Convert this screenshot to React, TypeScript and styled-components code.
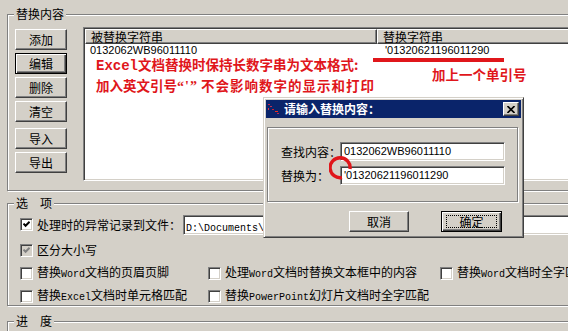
import React from 'react';
import styled, { createGlobalStyle, css } from 'styled-components';

const FACE = '#d4d0c8';
const SHADOW = '#808080';
const DARK = '#404040';
const LIGHT = '#ffffff';
const RED = '#e0161b';
const NAVY = '#0a246a';
const UI_FONT = '"Noto Sans CJK SC", "Liberation Sans", sans-serif';
const DATA_FONT = '"Liberation Sans", "Noto Sans CJK SC", sans-serif';

const GlobalStyle = createGlobalStyle`
  html, body { margin: 0; padding: 0; background: ${FACE}; }
  body {
    font-family: ${UI_FONT};
    font-size: 12px;
    color: #000;
    text-autospace: no-autospace;
    text-spacing-trim: space-all;
  }
  * { box-sizing: border-box; }
`;

const raised = css`
  border: 1px solid;
  border-color: ${LIGHT} ${DARK} ${DARK} ${LIGHT};
  box-shadow: inset -1px -1px ${SHADOW};
  background: ${FACE};
`;

const sunken = css`
  border: 1px solid;
  border-color: ${SHADOW} ${LIGHT} ${LIGHT} ${SHADOW};
  box-shadow: inset 1px 1px ${DARK}, inset -1px -1px ${FACE};
`;

const Screen = styled.div`
  position: relative;
  width: 568px;
  height: 331px;
  overflow: hidden;
  padding: 6px 0 0 7px;
  display: flex;
  flex-direction: column;
  align-items: flex-start;
`;

/* etched group box */
const Group = styled.fieldset<{ $gap?: number; $height?: number }>`
  flex: none;
  width: 600px;
  height: ${({ $height }) => ($height ? `${$height}px` : 'auto')};
  margin: ${({ $gap }) => $gap ?? 0}px 0 0;
  padding: 0;
  border: 1px solid ${SHADOW};
  box-shadow: inset 1px 1px ${LIGHT}, 1px 1px ${LIGHT};
`;

const Legend = styled.legend`
  margin-left: 6px;
  padding: 0 2px;
  line-height: 16px;
  background: ${FACE};
`;

const Latin = styled.span<{ $size?: number }>`
  font-family: 'Liberation Mono', monospace;
  font-size: ${({ $size }) => $size ?? 10}px;
`;

/* ---------- replace list ---------- */
const ReplaceBody = styled.div`
  display: flex;
  align-items: flex-start;
  padding: 5px 0 9px 7px;
`;

const ButtonColumn = styled.div`
  display: flex;
  flex-direction: column;
  gap: 3px;
  margin-top: 2px;
  width: 52px;
`;

const PushButton = styled.button<{ $default?: boolean; $gap?: number; $width?: number }>`
  ${raised};
  width: ${({ $width }) => $width ?? 52}px;
  height: 21px;
  margin-top: ${({ $gap }) => $gap ?? 0}px;
  padding: 0;
  display: flex;
  align-items: center;
  justify-content: center;
  font-family: ${UI_FONT};
  font-size: 12px;
  line-height: 14px;
  color: #000;
  ${({ $default }) =>
    $default &&
    css`
      border: 1px solid #000;
      box-shadow: inset 1px 1px ${LIGHT}, inset -1px -1px ${DARK}, inset -2px -2px ${SHADOW};
    `}
`;

const FocusRing = styled.span`
  flex: 1;
  align-self: stretch;
  margin: 3px 4px;
  border: 1px dotted #000;
  display: flex;
  align-items: center;
  justify-content: center;
`;

const ListView = styled.div`
  ${sunken};
  position: relative;
  flex: 1;
  height: 154px;
  margin-left: 16px;
  padding: 1px;
  background: #fff;
`;

const HeaderRow = styled.div`
  display: flex;
  height: 15px;
`;

const HeaderCell = styled.div<{ $width?: number }>`
  ${raised};
  flex: ${({ $width }) => ($width ? 'none' : 1)};
  width: ${({ $width }) => ($width ? `${$width}px` : 'auto')};
  padding-left: 5px;
  line-height: 13px;
  white-space: nowrap;
`;

const DataRow = styled.div`
  display: flex;
  height: 13px;
  align-items: center;
  font-family: ${DATA_FONT};
  font-size: 11px;
  line-height: 13px;
`;

const DataCell = styled.div<{ $width?: number; $indent: number }>`
  flex: ${({ $width }) => ($width ? 'none' : 1)};
  width: ${({ $width }) => ($width ? `${$width}px` : 'auto')};
  padding-left: ${({ $indent }) => $indent}px;
  white-space: nowrap;
`;

/* red notes drawn over the list */
const Note = styled.div<{ $left: number; $top: number }>`
  position: absolute;
  left: ${({ $left }) => $left}px;
  top: ${({ $top }) => $top}px;
  display: flex;
  flex-direction: column;
  gap: 5px;
  color: ${RED};
  font-size: 13.5px;
  font-weight: 700;
  line-height: 14px;
  white-space: nowrap;
`;

const Quote = styled.span`
  font-family: 'Liberation Serif', serif;
  font-size: 14px;
  letter-spacing: 1px;
`;

const Spread = styled.span`
  letter-spacing: 1px;
`;

const RedBar = styled.div`
  position: absolute;
  left: 289px;
  top: 30px;
  width: 131px;
  height: 4px;
  background: ${RED};
`;

/* ---------- options ---------- */
const OptionsBody = styled.div`
  display: flex;
  flex-direction: column;
  gap: 7px;
  padding: 3px 0 1px 12px;
`;

const OptionLine = styled.div<{ $height?: number }>`
  display: flex;
  align-items: center;
  height: ${({ $height }) => $height ?? 16}px;
`;

const OptionGrid = styled.div`
  display: grid;
  grid-template-columns: 188px 232px 1fr;
  row-gap: 7px;
`;

const Check = styled.label`
  display: flex;
  align-items: center;
  gap: 4px;
  height: 16px;
  line-height: 16px;
  white-space: nowrap;
`;

const CheckText = styled.span<{ $width?: number }>`
  width: ${({ $width }) => ($width ? `${$width}px` : 'auto')};
  flex: none;
`;

const Box = styled.span<{ $disabled?: boolean }>`
  ${sunken};
  flex: none;
  width: 13px;
  height: 13px;
  display: flex;
  align-items: center;
  justify-content: center;
  background: ${({ $disabled }) => ($disabled ? FACE : '#fff')};
`;

const FileField = styled.div`
  ${sunken};
  width: 420px;
  height: 20px;
  background: #fff;
  padding: 3px 0 0 2px;
  line-height: 14px;
  white-space: nowrap;
`;

/* ---------- dialog ---------- */
const Dialog = styled.div`
  position: absolute;
  left: 263px;
  top: 97px;
  width: 261px;
  height: 141px;
  display: flex;
  flex-direction: column;
  padding: 2px;
  background: ${FACE};
  border: 1px solid;
  border-color: ${FACE} ${DARK} ${DARK} ${FACE};
  box-shadow: inset 1px 1px ${LIGHT}, inset -1px -1px ${SHADOW};
`;

const TitleBar = styled.div`
  display: flex;
  align-items: center;
  gap: 3px;
  height: 18px;
  padding: 0 2px 0 1px;
  background: ${NAVY};
  color: #fff;
  font-weight: 700;
  line-height: 16px;
`;

const CloseButton = styled.div`
  ${raised};
  margin-left: auto;
  width: 16px;
  height: 14px;
  display: flex;
  align-items: center;
  justify-content: center;
`;

const Panel = styled.div`
  margin: 9px 3px 0 1px;
  height: 75px;
  padding: 14px 0 0 13px;
  display: flex;
  flex-direction: column;
  gap: 5px;
  border: 1px solid ${SHADOW};
  box-shadow: inset 1px 1px ${LIGHT}, 1px 1px ${LIGHT};
`;

const FieldRow = styled.div`
  display: flex;
  align-items: center;
  height: 19px;
`;

const FieldLabel = styled.span`
  width: 59px;
  white-space: nowrap;
`;

const TextField = styled.div`
  ${sunken};
  width: 165px;
  height: 19px;
  padding: 0 0 0 3px;
  background: #fff;
  font-family: ${DATA_FONT};
  font-size: 11px;
  line-height: 17px;
`;

const DialogButtons = styled.div`
  display: flex;
  gap: 32px;
  margin-top: 9px;
  padding-left: 83px;
`;

const Ring = styled.svg`
  position: absolute;
  left: 329px;
  top: 154px;
`;

function CheckMark({ gray }: { gray?: boolean }) {
  return (
    <svg width="7" height="7" viewBox="0 0 7 7">
      <path d="M0.5 2.6 L2.6 4.8 L6.6 0.8" fill="none" stroke={gray ? SHADOW : '#000'} strokeWidth="2" />
    </svg>
  );
}

function CheckOption({
  checked,
  disabled,
  width,
  children,
}: {
  checked?: boolean;
  disabled?: boolean;
  width?: number;
  children: React.ReactNode;
}) {
  return (
    <Check>
      <Box $disabled={disabled}>{checked && <CheckMark gray={disabled} />}</Box>
      <CheckText $width={width}>{children}</CheckText>
    </Check>
  );
}

function AppIcon() {
  return (
    <svg width="14" height="12" viewBox="0 0 14 12">
      <rect x="1" y="1" width="2" height="1" fill="#d02040" />
      <rect x="3" y="3" width="2" height="1" fill="#c03050" />
      <rect x="1" y="5" width="1" height="2" fill="#e03040" />
      <rect x="5" y="6" width="2" height="1" fill="#d02030" />
      <rect x="8" y="8" width="3" height="1" fill="#f03020" />
      <rect x="10" y="10" width="2" height="1" fill="#c02050" />
    </svg>
  );
}

function CloseGlyph() {
  return (
    <svg width="8" height="7" viewBox="0 0 8 7">
      <path d="M0.5 0 L7.5 7 M7.5 0 L0.5 7" stroke="#000" strokeWidth="1.6" />
    </svg>
  );
}

export default function App() {
  return (
    <>
      <GlobalStyle />
      <Screen>
        <Group>
          <Legend>替换内容</Legend>
          <ReplaceBody>
            <ButtonColumn>
              <PushButton>添加</PushButton>
              <PushButton $default>编辑</PushButton>
              <PushButton>删除</PushButton>
              <PushButton>清空</PushButton>
              <PushButton $gap={3}>导入</PushButton>
              <PushButton>导出</PushButton>
            </ButtonColumn>
            <ListView>
              <HeaderRow>
                <HeaderCell $width={292}>被替换字符串</HeaderCell>
                <HeaderCell>替换字符串</HeaderCell>
              </HeaderRow>
              <DataRow>
                <DataCell $width={292} $indent={5}>0132062WB96011110</DataCell>
                <DataCell $indent={8}>'01320621196011290</DataCell>
              </DataRow>
              <RedBar />
              <Note $left={12} $top={29}>
                <div>
                  <Latin $size={14}>Excel</Latin>文档替换时保持长数字串为文本格式:
                </div>
                <div>
                  加入英文引号<Quote>“'”</Quote> <Spread>不会影响数字的显示和打印</Spread>
                </div>
              </Note>
              <Note $left={348} $top={39}>加上一个单引号</Note>
            </ListView>
          </ReplaceBody>
        </Group>

        <Group $gap={4}>
          <Legend>选　项</Legend>
          <OptionsBody>
            <OptionLine $height={21}>
              <CheckOption checked width={146}>
                处理时的异常记录到文件：
              </CheckOption>
              <FileField>
                <Latin>D:\Documents\替换内容</Latin>
              </FileField>
            </OptionLine>
            <OptionLine>
              <CheckOption checked disabled>区分大小写</CheckOption>
            </OptionLine>
            <OptionGrid>
              <CheckOption>
                替换<Latin>Word</Latin>文档的页眉页脚
              </CheckOption>
              <CheckOption>
                处理<Latin>Word</Latin>文档时替换文本框中的内容
              </CheckOption>
              <CheckOption>
                替换<Latin>Word</Latin>文档时全字匹配
              </CheckOption>
              <CheckOption>
                替换<Latin>Excel</Latin>文档时单元格匹配
              </CheckOption>
              <CheckOption>
                替换<Latin>PowerPoint</Latin>幻灯片文档时全字匹配
              </CheckOption>
            </OptionGrid>
          </OptionsBody>
        </Group>

        <Group $gap={7} $height={40}>
          <Legend>进　度</Legend>
        </Group>

        <Dialog>
          <TitleBar>
            <AppIcon />
            请输入替换内容：
            <CloseButton>
              <CloseGlyph />
            </CloseButton>
          </TitleBar>
          <Panel>
            <FieldRow>
              <FieldLabel>查找内容：</FieldLabel>
              <TextField>0132062WB96011110</TextField>
            </FieldRow>
            <FieldRow>
              <FieldLabel>替换为：</FieldLabel>
              <TextField>'01320621196011290</TextField>
            </FieldRow>
          </Panel>
          <DialogButtons>
            <PushButton $width={60}>取消</PushButton>
            <PushButton $width={61} $default>
              <FocusRing>确定</FocusRing>
            </PushButton>
          </DialogButtons>
        </Dialog>

        <Ring width="26" height="27" viewBox="0 0 26 27">
          <path d="M21 15 A10 10 0 1 0 13 23.5" fill="none" stroke={RED} strokeWidth="3.4" />
        </Ring>
      </Screen>
    </>
  );
}
